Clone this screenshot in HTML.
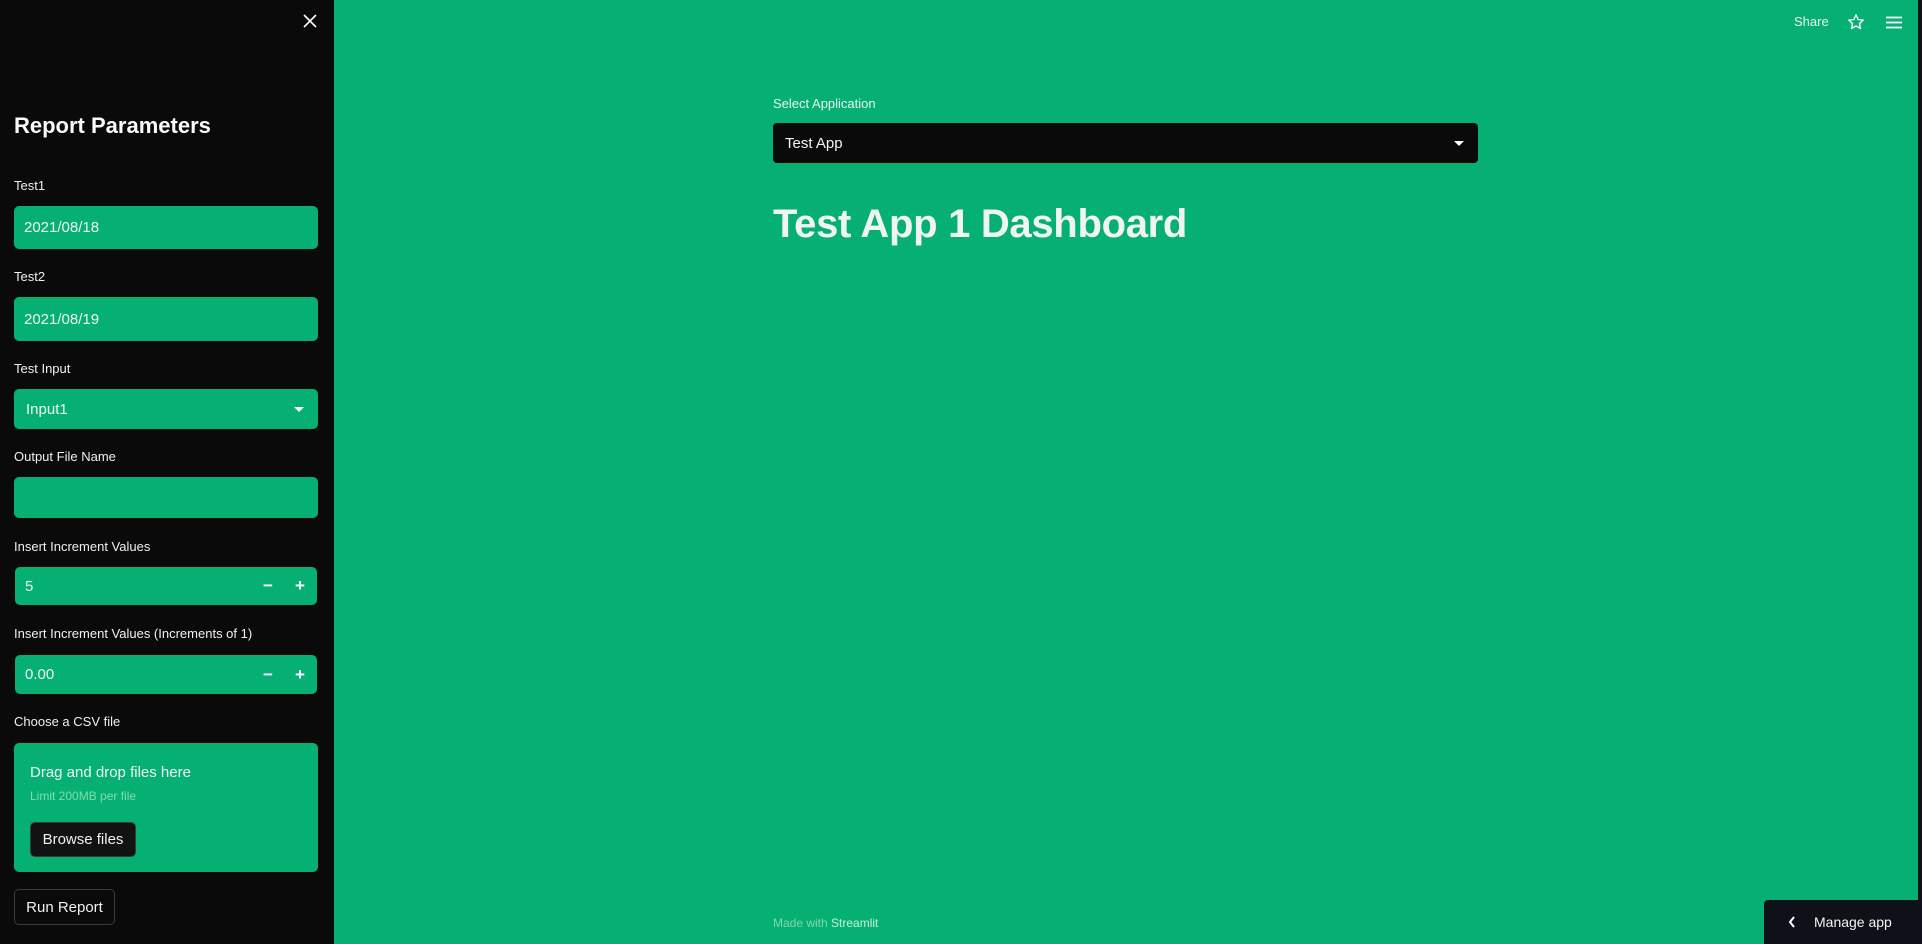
<!DOCTYPE html>
<html><head><meta charset="utf-8"><style>
*{box-sizing:border-box;margin:0;padding:0}
body{width:1922px;height:944px;overflow:hidden;background:#06b072;font-family:"Liberation Sans",sans-serif;color:#f0f5f2;position:relative}
.sb{position:absolute;left:0;top:0;width:334px;height:944px;background:#0a0a0a}
.abs{position:absolute}
.lbl{position:absolute;left:14px;font-size:13px;color:#f0f0f0}
.inp{position:absolute;left:14px;width:304px;background:#06b072;border-radius:5px;font-size:15px;padding-left:10px;display:flex;align-items:center}
.btn{position:absolute;background:#121212;border:1px solid #3a3a3a;border-radius:5px;font-size:15px;display:flex;align-items:center;justify-content:center;color:#f0f0f0}
.tri{width:0;height:0;border-left:5px solid transparent;border-right:5px solid transparent;border-top:5px solid #fff;position:absolute}
.pm{position:absolute;font-size:17px;font-weight:bold;color:#fff}
</style></head><body>
<div class="sb">
<svg class="abs" style="left:303px;top:14px" width="14" height="14"><path d="M1 1L13 13M13 1L1 13" stroke="#fff" stroke-width="1.6"/></svg>
<div class="abs" style="left:14px;top:113px;font-size:22px;font-weight:bold;color:#fafafa">Report Parameters</div>
<div class="lbl" style="top:178px">Test1</div>
<div class="inp" style="top:206px;height:43px">2021/08/18</div>
<div class="lbl" style="top:269px">Test2</div>
<div class="inp" style="top:297px;height:44px">2021/08/19</div>
<div class="lbl" style="top:361px">Test Input</div>
<div class="inp" style="top:389px;height:40px;padding-left:12px">Input1<div class="tri" style="right:14px;top:18px"></div></div>
<div class="lbl" style="top:449px">Output File Name</div>
<div class="inp" style="top:477px;height:41px"></div>
<div class="lbl" style="top:539px">Insert Increment Values</div>
<div class="inp" style="top:567px;height:38px;left:15px;width:302px">5<span class="pm" style="left:248px">−</span><span class="pm" style="left:280px">+</span></div>
<div class="lbl" style="top:626px">Insert Increment Values (Increments of 1)</div>
<div class="inp" style="top:655px;height:39px;left:15px;width:302px">0.00<span class="pm" style="left:248px">−</span><span class="pm" style="left:280px">+</span></div>
<div class="lbl" style="top:714px">Choose a CSV file</div>
<div class="inp" style="top:743px;height:129px;display:block;padding-left:16px">
<div style="position:absolute;top:21px;left:16px;font-size:15px">Drag and drop files here</div>
<div style="position:absolute;top:46px;left:16px;font-size:12px;color:#7fdcb0">Limit 200MB per file</div>
</div>
<div class="btn" style="left:30px;top:822px;width:106px;height:35px">Browse files</div>
<div class="btn" style="left:14px;top:889px;width:101px;height:36px;background:#0a0a0a">Run Report</div>
</div>
<div class="abs" style="left:1794px;top:14px;font-size:13px;color:#e8f5ee">Share</div>
<svg class="abs" style="left:1847px;top:13px" width="18" height="18" viewBox="0 0 24 24"><path d="M12 2.5l2.9 6.3 6.8.7-5.1 4.6 1.5 6.7L12 17.3l-6.1 3.5 1.5-6.7-5.1-4.6 6.8-.7z" fill="none" stroke="#fff" stroke-width="1.8" stroke-linejoin="round"/></svg>
<svg class="abs" style="left:1886px;top:16px" width="16" height="13"><path d="M0 1.5H16M0 6.5H16M0 11.5H16" stroke="#fff" stroke-width="1.8"/></svg>
<div class="abs" style="left:773px;top:96px;font-size:13px;color:#e8f5ee">Select Application</div>
<div class="abs" style="left:773px;top:123px;width:705px;height:40px;background:#0a0a0a;border-radius:4px;font-size:15px;display:flex;align-items:center;padding-left:12px">Test App<div class="tri" style="right:14px;top:18px"></div></div>
<div class="abs" style="left:773px;top:202px;font-size:40px;font-weight:bold;color:#f0f5f2;letter-spacing:-0.3px">Test App 1 Dashboard</div>
<div class="abs" style="left:773px;top:916px;font-size:12px;color:#7fd8ad">Made with <span style="color:#c8efdb">Streamlit</span></div>
<div class="abs" style="left:1764px;top:900px;width:158px;height:44px;background:#0e1117;border-radius:4px 0 0 0;font-size:14px;display:flex;align-items:center">
<svg style="margin-left:24px;margin-right:18px" width="8" height="12"><path d="M6 1L2 6l4 5" stroke="#fff" stroke-width="2" fill="none"/></svg>Manage app</div>
<div class="abs" style="left:1918px;top:0;width:4px;height:944px;background:#0e1117"></div>
</body></html>
